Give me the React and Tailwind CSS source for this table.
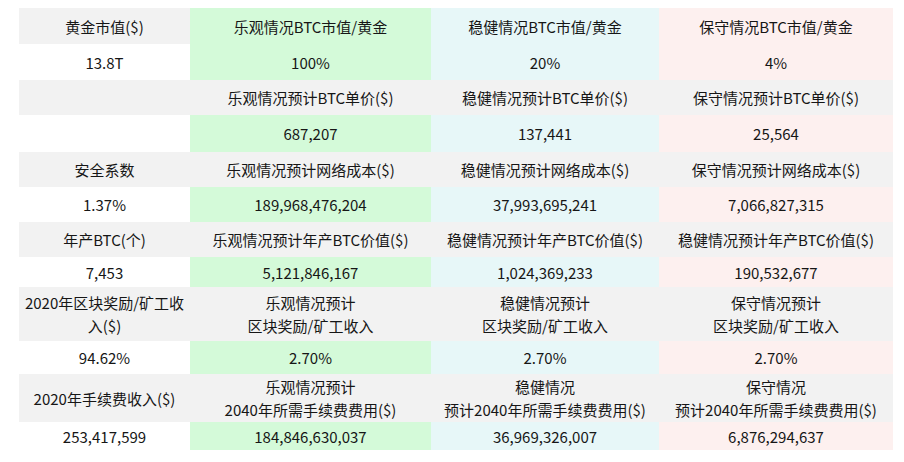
import React from "react";

/* -------- table data -------- */
// kind: "head" rows are grey across (first one coloured), "data" rows tinted per column
const rows = [
  { kind: "head", h: "h-[36px]", first: true, cells: ["黄金市值($)", "乐观情况BTC市值/黄金", "稳健情况BTC市值/黄金", "保守情况BTC市值/黄金"] },
  { kind: "data", h: "h-[36px]", cells: ["13.8T", "100%", "20%", "4%"] },
  { kind: "head", h: "h-[35px]", cells: ["", "乐观情况预计BTC单价($)", "稳健情况预计BTC单价($)", "保守情况预计BTC单价($)"] },
  { kind: "data", h: "h-[37px]", cells: ["", "687,207", "137,441", "25,564"] },
  { kind: "head", h: "h-[35px]", cells: ["安全系数", "乐观情况预计网络成本($)", "稳健情况预计网络成本($)", "保守情况预计网络成本($)"] },
  { kind: "data", h: "h-[35px]", cells: ["1.37%", "189,968,476,204", "37,993,695,241", "7,066,827,315"] },
  { kind: "head", h: "h-[35px]", cells: ["年产BTC(个)", "乐观情况预计年产BTC价值($)", "稳健情况预计年产BTC价值($)", "稳健情况预计年产BTC价值($)"] },
  { kind: "data", h: "h-[30px]", cells: ["7,453", "5,121,846,167", "1,024,369,233", "190,532,677"] },
  { kind: "head", h: "h-[54px]", cells: [["2020年区块奖励/矿工收", "入($)"], ["乐观情况预计", "区块奖励/矿工收入"], ["稳健情况预计", "区块奖励/矿工收入"], ["保守情况预计", "区块奖励/矿工收入"]] },
  { kind: "data", h: "h-[33px]", cells: ["94.62%", "2.70%", "2.70%", "2.70%"] },
  { kind: "head", h: "h-[48px]", cells: ["2020年手续费收入($)", ["乐观情况预计", "2040年所需手续费费用($)"], ["稳健情况", "预计2040年所需手续费费用($)"], ["保守情况", "预计2040年所需手续费费用($)"]] },
  { kind: "data", h: "h-[28px]", cells: ["253,417,599", "184,846,630,037", "36,969,326,007", "6,876,294,637"] },
];

const tint = ["bg-white", "bg-[#d4fad9]", "bg-[#e7f7f8]", "bg-[#fdf0ef]"];

const cellBg = (row, i) => {
  if (row.kind === "data") return tint[i];
  if (row.first && i > 0) return tint[i];
  return "bg-[#f2f2f2]";
};

export default function App() {
  return (
    <div
      className="w-[904px] h-[462px] bg-white pt-[8px] pl-[19px] text-[15px] text-[#161616] leading-[23px]"
      style={{ fontFamily: '"Noto Sans CJK SC", "Noto Sans", sans-serif' }}
    >
      <div className="flex flex-col w-[874px]">
        {rows.map((row, r) => (
          <div key={r} className={`grid grid-cols-[171px_241px_228px_234px] ${row.h}`}>
            {row.cells.map((c, i) => (
              <div
                key={i}
                className={`flex flex-col items-center justify-center text-center px-1 ${cellBg(row, i)}`}
              >
                {Array.isArray(c) ? (
                  c.map((line, k) => (
                    <span key={k} className="whitespace-nowrap">
                      {line}
                    </span>
                  ))
                ) : (
                  <span>{c}</span>
                )}
              </div>
            ))}
          </div>
        ))}
      </div>
    </div>
  );
}
